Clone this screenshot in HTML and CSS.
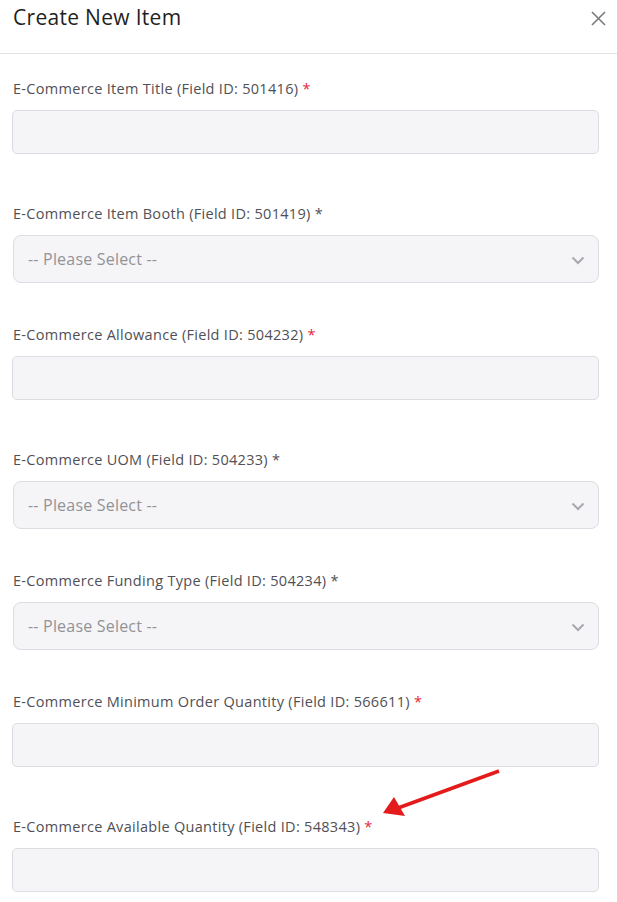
FILE: index.html
```html
<!DOCTYPE html>
<html>
<head>
<meta charset="utf-8">
<link rel="stylesheet" href="styles.css">
</head>
<body>
<div class="modal">
  <header class="modal-header">
    <h1 class="modal-title">Create New Item</h1>
    <button class="close" aria-label="Close">
      <svg width="15" height="15" viewBox="0 0 15 15"><path d="M1 1L14 14M14 1L1 14" stroke="#7a7a7a" stroke-width="1.6" fill="none"/></svg>
    </button>
  </header>
  <div class="modal-body">
    <div class="field field-text">
      <label class="label">E-Commerce Item Title (Field ID: 501416) <span class="req">*</span></label>
      <div class="input"></div>
    </div>
    <div class="field field-select">
      <label class="label">E-Commerce Item Booth (Field ID: 501419) <span class="req-dark">*</span></label>
      <div class="select"><span class="placeholder">-- Please Select --</span>
        <svg class="chev" width="14" height="9" viewBox="0 0 14 9"><path d="M1.5 1.5L7 7L12.5 1.5" stroke="#a8a8ae" stroke-width="2" fill="none"/></svg></div>
    </div>
    <div class="field field-text">
      <label class="label">E-Commerce Allowance (Field ID: 504232) <span class="req">*</span></label>
      <div class="input"></div>
    </div>
    <div class="field field-select">
      <label class="label">E-Commerce UOM (Field ID: 504233) <span class="req-dark">*</span></label>
      <div class="select"><span class="placeholder">-- Please Select --</span>
        <svg class="chev" width="14" height="9" viewBox="0 0 14 9"><path d="M1.5 1.5L7 7L12.5 1.5" stroke="#a8a8ae" stroke-width="2" fill="none"/></svg></div>
    </div>
    <div class="field field-select">
      <label class="label">E-Commerce Funding Type (Field ID: 504234) <span class="req-dark">*</span></label>
      <div class="select"><span class="placeholder">-- Please Select --</span>
        <svg class="chev" width="14" height="9" viewBox="0 0 14 9"><path d="M1.5 1.5L7 7L12.5 1.5" stroke="#a8a8ae" stroke-width="2" fill="none"/></svg></div>
    </div>
    <div class="field field-text">
      <label class="label">E-Commerce Minimum Order Quantity (Field ID: 566611) <span class="req">*</span></label>
      <div class="input"></div>
    </div>
    <div class="field field-text">
      <label class="label">E-Commerce Available Quantity (Field ID: 548343) <span class="req">*</span></label>
      <div class="input"></div>
    </div>
  </div>
  <svg class="arrow" width="617" height="902" viewBox="0 0 617 902">
    <line x1="499" y1="771" x2="398" y2="808" stroke="#e31b1b" stroke-width="3.5"/>
    <polygon points="383,813 394,797 405,816" fill="#e31b1b"/>
  </svg>
</div>
</body>
</html>
```

FILE: styles.css
```css
html, body {
  margin: 0;
  padding: 0;
  background: #ffffff;
}
body {
  font-family: "Open Sans", "Noto Sans", sans-serif;
  color: #4a4a4a;
  width: 617px;
  height: 902px;
  overflow: hidden;
}
.modal {
  position: relative;
  width: 617px;
  height: 902px;
}
.modal-header {
  display: flex;
  align-items: flex-start;
  justify-content: space-between;
  border-bottom: 1px solid #e2e2e8;
  box-sizing: border-box;
  padding: 3px 11px 0 13px;
  height: 54px;
}
.modal-title {
  margin: 0;
  font-size: 21px;
  letter-spacing: 0.3px;
  font-weight: 400;
  line-height: 28px;
  color: #1f1f24;
}
.close {
  border: 0;
  background: none;
  padding: 0;
  margin-top: 8px;
  width: 15px;
  height: 15px;
  display: flex;
}
.modal-body {
  padding: 25px 18px 0 12px;
}
.field {
  display: flex;
  flex-direction: column;
}
.field-text {
  margin-bottom: 50px;
}
.field-select {
  margin-bottom: 42px;
}
.label {
  font-size: 14.5px;
  letter-spacing: 0.3px;
  line-height: 20px;
  color: #505055;
  margin-bottom: 11px;
  padding-left: 1px;
}
.req {
  color: #e8253a;
}
.req-dark {
  color: #505055;
}
.input {
  height: 44px;
  box-sizing: border-box;
  background: #f5f5f8;
  border: 1px solid #dcdce3;
  border-radius: 5px;
}
.select {
  height: 48px;
  box-sizing: border-box;
  background: #f5f5f8;
  border: 1px solid #dcdce3;
  border-radius: 8px;
  display: flex;
  align-items: center;
  justify-content: space-between;
  padding: 0 13px 0 14px;
  margin-left: 1px;
}
.placeholder {
  font-size: 16px;
  letter-spacing: 0.2px;
  color: #929297;
}
.chev {
  display: block;
  margin-top: 2px;
}
.arrow {
  position: absolute;
  left: 0;
  top: 0;
  pointer-events: none;
}
```
